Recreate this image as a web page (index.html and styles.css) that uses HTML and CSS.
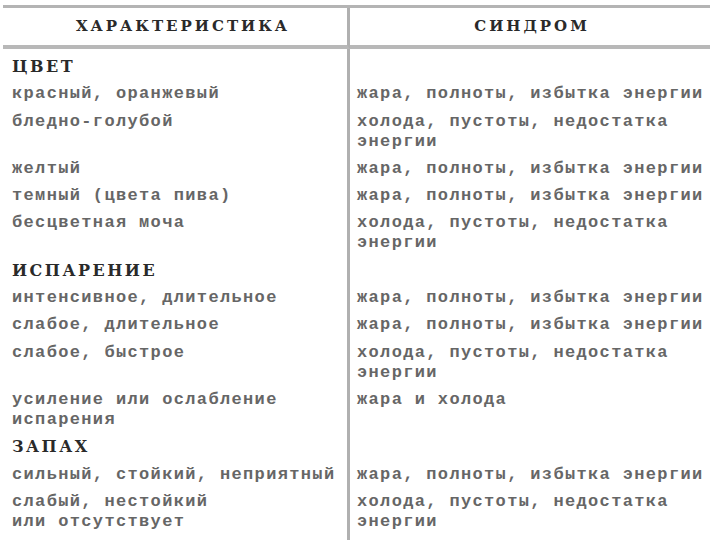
FILE: index.html
```html
<!DOCTYPE html>
<html lang="ru">
<head>
<meta charset="utf-8">
<link rel="stylesheet" href="styles.css">
</head>
<body>
<div class="sheet">
  <div class="hc hl">ХАРАКТЕРИСТИКА</div>
  <div class="hc hr">СИНДРОМ</div>

  <div class="c l sec first">ЦВЕТ</div>
  <div class="c r first"></div>

  <div class="c l">красный, оранжевый</div>
  <div class="c r">жара, полноты, избытка энергии</div>

  <div class="c l">бледно-голубой</div>
  <div class="c r">холода, пустоты, недостатка<br>энергии</div>

  <div class="c l">желтый</div>
  <div class="c r">жара, полноты, избытка энергии</div>

  <div class="c l">темный (цвета пива)</div>
  <div class="c r">жара, полноты, избытка энергии</div>

  <div class="c l">бесцветная моча</div>
  <div class="c r">холода, пустоты, недостатка<br>энергии</div>

  <div class="c l sec">ИСПАРЕНИЕ</div>
  <div class="c r"></div>

  <div class="c l">интенсивное, длительное</div>
  <div class="c r">жара, полноты, избытка энергии</div>

  <div class="c l">слабое, длительное</div>
  <div class="c r">жара, полноты, избытка энергии</div>

  <div class="c l">слабое, быстрое</div>
  <div class="c r">холода, пустоты, недостатка<br>энергии</div>

  <div class="c l">усиление или ослабление<br>испарения</div>
  <div class="c r">жара и холода</div>

  <div class="c l sec">ЗАПАХ</div>
  <div class="c r"></div>

  <div class="c l">сильный, стойкий, неприятный</div>
  <div class="c r">жара, полноты, избытка энергии</div>

  <div class="c l last">слабый, нестойкий<br>или отсутствует</div>
  <div class="c r last">холода, пустоты, недостатка<br>энергии</div>
</div>
</body>
</html>
```

FILE: styles.css
```css
html, body {
  margin: 0;
  padding: 0;
  background: #ffffff;
}

body {
  font-family: "Liberation Mono", "DejaVu Sans Mono", monospace;
  color: #666666;
}

.sheet {
  margin: 5px 10px 0 3px;
  border-top: 3px solid #b4b4b4;
  display: grid;
  grid-template-columns: 347px 1fr;
}

.hc {
  height: 37px;
  line-height: 37px;
  border-bottom: 4px solid #b8b8b8;
  text-align: center;
  font-family: "DejaVu Serif", "Liberation Serif", serif;
  font-size: 15px;
  font-weight: bold;
  letter-spacing: 3px;
  color: #2a2a2a;
  white-space: nowrap;
}

.hl {
  border-right: 3px solid #b0b0b0;
  padding-left: 16px;
}

.hr {
  padding-left: 4px;
}

.c {
  font-size: 17px;
  font-weight: bold;
  line-height: 20px;
  letter-spacing: 1.35px;
  padding-bottom: 7.3px;
  white-space: nowrap;
}

.l {
  border-right: 3px solid #b0b0b0;
  padding-left: 9px;
}

.r {
  padding-left: 7px;
}

.first {
  padding-top: 8px;
}

.sec {
  font-family: "DejaVu Serif", "Liberation Serif", serif;
  font-size: 16px;
  letter-spacing: 2.5px;
  color: #2a2a2a;
}

.last {
  padding-bottom: 20px;
}
```
